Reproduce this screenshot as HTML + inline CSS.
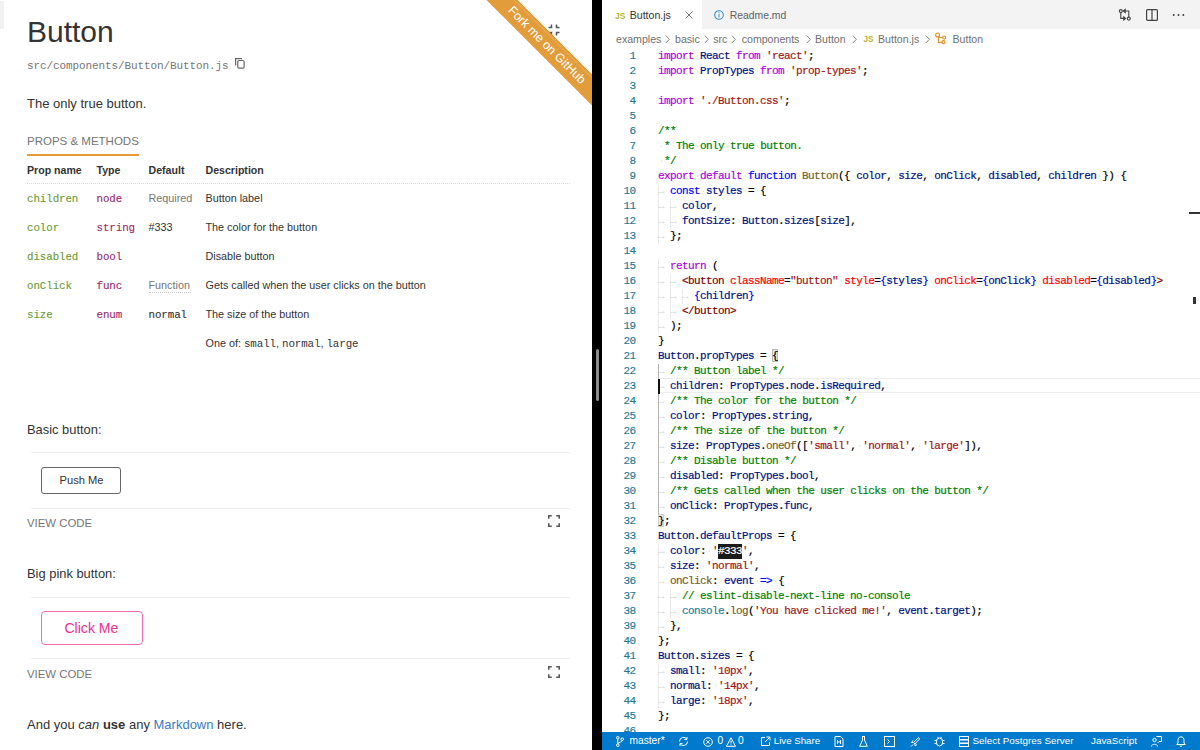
<!DOCTYPE html>
<html><head><meta charset="utf-8"><style>
html,body{margin:0;padding:0;width:1200px;height:750px;overflow:hidden;background:#fff;position:relative;font-family:"Liberation Sans",sans-serif}
.t{position:absolute;white-space:pre;margin:0}
.ln{position:absolute;left:599px;width:36.6px;text-align:right;font-family:"Liberation Mono",monospace;font-size:11px;line-height:15px;letter-spacing:-0.6px;color:#237893;white-space:pre;-webkit-text-stroke:0.15px}
.cl{position:absolute;left:658px;font-family:"Liberation Mono",monospace;font-size:11px;line-height:15px;letter-spacing:-0.6px;color:#000;white-space:pre;-webkit-text-stroke:0.2px}
.ws{color:rgba(51,51,51,0.15)}
.tab{color:rgba(51,51,51,0.18)}
.ig{position:absolute;width:0;height:15px;border-left:1px solid rgba(0,0,0,0.08)}
</style></head><body>
<div class="t" style="left:27px;top:17.31px;font-size:30px;line-height:30px;color:#333;font-family:'Liberation Sans', sans-serif;font-weight:normal;">Button</div>
<div class="t" style="left:27px;top:61.07px;font-size:11px;line-height:11px;color:#767676;font-family:'Liberation Mono', monospace;font-weight:normal;letter-spacing:-0.1px">src/components/Button/Button.js</div>
<svg class="t" style="left:234px;top:57px" width="12" height="13" viewBox="0 0 12 13"><path d="M1.6 8.5V1.6H8" fill="none" stroke="#666" stroke-width="1.2"/><rect x="3.8" y="3.5" width="6.3" height="7.7" rx="1.2" fill="none" stroke="#666" stroke-width="1.2"/></svg>
<div class="t" style="left:27px;top:97.40px;font-size:13px;line-height:13px;color:#333;font-family:'Liberation Sans', sans-serif;font-weight:normal;">The only true button.</div>
<div class="t" style="left:27px;top:136.27px;font-size:11.5px;line-height:11.5px;color:#767676;font-family:'Liberation Sans', sans-serif;font-weight:normal;">PROPS &amp; METHODS</div>
<div class="t" style="left:27px;top:154px;width:112px;height:2px;background:#e89b35"></div>
<div class="t" style="left:27px;top:165.03px;font-size:10.6px;line-height:10.6px;color:#333;font-family:'Liberation Sans', sans-serif;font-weight:bold;">Prop name</div>
<div class="t" style="left:96.5px;top:165.03px;font-size:10.6px;line-height:10.6px;color:#333;font-family:'Liberation Sans', sans-serif;font-weight:bold;">Type</div>
<div class="t" style="left:148.5px;top:165.03px;font-size:10.6px;line-height:10.6px;color:#333;font-family:'Liberation Sans', sans-serif;font-weight:bold;">Default</div>
<div class="t" style="left:205.5px;top:165.03px;font-size:10.6px;line-height:10.6px;color:#333;font-family:'Liberation Sans', sans-serif;font-weight:bold;">Description</div>
<div class="t" style="left:27px;top:182.5px;width:543px;height:1px;border-top:1px dotted #d8d8d8;height:0"></div>
<div class="t" style="left:27px;top:193.83px;font-size:10.8px;line-height:10.8px;color:#6a9a38;font-family:'Liberation Mono', monospace;font-weight:normal;letter-spacing:-0.07px;-webkit-text-stroke:0.12px">children</div>
<div class="t" style="left:96.5px;top:193.83px;font-size:10.8px;line-height:10.8px;color:#9a2a68;font-family:'Liberation Mono', monospace;font-weight:normal;letter-spacing:-0.07px;-webkit-text-stroke:0.12px">node</div>
<div class="t" style="left:148.5px;top:192.96px;font-size:10.8px;line-height:10.8px;color:#767676;font-family:'Liberation Sans', sans-serif;font-weight:normal;">Required</div>
<div class="t" style="left:205.5px;top:192.96px;font-size:10.8px;line-height:10.8px;color:#333;font-family:'Liberation Sans', sans-serif;font-weight:normal;">Button label</div>
<div class="t" style="left:27px;top:222.93px;font-size:10.8px;line-height:10.8px;color:#6a9a38;font-family:'Liberation Mono', monospace;font-weight:normal;letter-spacing:-0.07px;-webkit-text-stroke:0.12px">color</div>
<div class="t" style="left:96.5px;top:222.93px;font-size:10.8px;line-height:10.8px;color:#9a2a68;font-family:'Liberation Mono', monospace;font-weight:normal;letter-spacing:-0.07px;-webkit-text-stroke:0.12px">string</div>
<div class="t" style="left:148.5px;top:222.06px;font-size:10.8px;line-height:10.8px;color:#333;font-family:'Liberation Sans', sans-serif;font-weight:normal;">#333</div>
<div class="t" style="left:205.5px;top:222.06px;font-size:10.8px;line-height:10.8px;color:#333;font-family:'Liberation Sans', sans-serif;font-weight:normal;">The color for the button</div>
<div class="t" style="left:27px;top:252.03px;font-size:10.8px;line-height:10.8px;color:#6a9a38;font-family:'Liberation Mono', monospace;font-weight:normal;letter-spacing:-0.07px;-webkit-text-stroke:0.12px">disabled</div>
<div class="t" style="left:96.5px;top:252.03px;font-size:10.8px;line-height:10.8px;color:#9a2a68;font-family:'Liberation Mono', monospace;font-weight:normal;letter-spacing:-0.07px;-webkit-text-stroke:0.12px">bool</div>
<div class="t" style="left:205.5px;top:251.16px;font-size:10.8px;line-height:10.8px;color:#333;font-family:'Liberation Sans', sans-serif;font-weight:normal;">Disable button</div>
<div class="t" style="left:27px;top:281.13px;font-size:10.8px;line-height:10.8px;color:#6a9a38;font-family:'Liberation Mono', monospace;font-weight:normal;letter-spacing:-0.07px;-webkit-text-stroke:0.12px">onClick</div>
<div class="t" style="left:96.5px;top:281.13px;font-size:10.8px;line-height:10.8px;color:#9a2a68;font-family:'Liberation Mono', monospace;font-weight:normal;letter-spacing:-0.07px;-webkit-text-stroke:0.12px">func</div>
<div class="t" style="left:148.5px;top:280.26px;font-size:10.8px;line-height:10.8px;color:#767676;font-family:'Liberation Sans', sans-serif;font-weight:normal;">Function</div>
<div class="t" style="left:205.5px;top:280.26px;font-size:10.8px;line-height:10.8px;color:#333;font-family:'Liberation Sans', sans-serif;font-weight:normal;">Gets called when the user clicks on the button</div>
<div class="t" style="left:27px;top:310.23px;font-size:10.8px;line-height:10.8px;color:#6a9a38;font-family:'Liberation Mono', monospace;font-weight:normal;letter-spacing:-0.07px;-webkit-text-stroke:0.12px">size</div>
<div class="t" style="left:96.5px;top:310.23px;font-size:10.8px;line-height:10.8px;color:#9a2a68;font-family:'Liberation Mono', monospace;font-weight:normal;letter-spacing:-0.07px;-webkit-text-stroke:0.12px">enum</div>
<div class="t" style="left:148.5px;top:310.23px;font-size:10.8px;line-height:10.8px;color:#333;font-family:'Liberation Mono', monospace;font-weight:normal;letter-spacing:-0.07px;-webkit-text-stroke:0.12px">normal</div>
<div class="t" style="left:205.5px;top:309.36px;font-size:10.8px;line-height:10.8px;color:#333;font-family:'Liberation Sans', sans-serif;font-weight:normal;">The size of the button</div>
<div class="t" style="left:148.5px;top:292.4px;width:42px;height:0px;border-top:1px dotted #c8c8c8"></div>
<div class="t" style="left:205.5px;top:338.46px;font-size:10.8px;line-height:10.8px;color:#333;font-family:'Liberation Sans', sans-serif;font-weight:normal;">One of: <span style="font-family:'Liberation Mono', monospace;letter-spacing:-0.07px">small</span>, <span style="font-family:'Liberation Mono', monospace;letter-spacing:-0.07px">normal</span>, <span style="font-family:'Liberation Mono', monospace;letter-spacing:-0.07px">large</span></div>
<div class="t" style="left:27px;top:423.58px;font-size:12.9px;line-height:12.9px;color:#333;font-family:'Liberation Sans', sans-serif;font-weight:normal;">Basic button:</div>
<div class="t" style="left:31px;top:452px;width:539px;height:1px;background:#efefef"></div>
<div class="t" style="left:41px;top:467px;width:80px;height:27px;box-sizing:border-box;border:1px solid #666;border-radius:3px;background:#fff"></div>
<div class="t" style="left:59.5px;top:475.46px;font-size:11.15px;line-height:11.15px;color:#333;font-family:'Liberation Sans', sans-serif;font-weight:normal;">Push Me</div>
<div class="t" style="left:31px;top:507.5px;width:539px;height:1px;background:#efefef"></div>
<div class="t" style="left:27px;top:518.35px;font-size:11.4px;line-height:11.4px;color:#767676;font-family:'Liberation Sans', sans-serif;font-weight:normal;">VIEW CODE</div>
<svg class="t" style="left:548px;top:515px" width="12" height="12" viewBox="0 0 12 12"><path d="M0.8 3.8V0.8H3.8M8.2 0.8H11.2V3.8M11.2 8.2V11.2H8.2M3.8 11.2H0.8V8.2" fill="none" stroke="#5a5a5a" stroke-width="1.6"/></svg>
<div class="t" style="left:27px;top:567.78px;font-size:12.9px;line-height:12.9px;color:#333;font-family:'Liberation Sans', sans-serif;font-weight:normal;">Big pink button:</div>
<div class="t" style="left:31px;top:596.5px;width:539px;height:1px;background:#efefef"></div>
<div class="t" style="left:41px;top:611px;width:102px;height:34px;box-sizing:border-box;border:1px solid #f56cb2;border-radius:4px;background:#fff"></div>
<div class="t" style="left:64.4px;top:620.76px;font-size:14.1px;line-height:14.1px;color:#ec3192;font-family:'Liberation Sans', sans-serif;font-weight:normal;">Click Me</div>
<div class="t" style="left:31px;top:657.5px;width:539px;height:1px;background:#efefef"></div>
<div class="t" style="left:27px;top:668.65px;font-size:11.4px;line-height:11.4px;color:#767676;font-family:'Liberation Sans', sans-serif;font-weight:normal;">VIEW CODE</div>
<svg class="t" style="left:548px;top:666px" width="12" height="12" viewBox="0 0 12 12"><path d="M0.8 3.8V0.8H3.8M8.2 0.8H11.2V3.8M11.2 8.2V11.2H8.2M3.8 11.2H0.8V8.2" fill="none" stroke="#5a5a5a" stroke-width="1.6"/></svg>
<div class="t" style="left:27px;top:718.20px;font-size:13px;line-height:13px;color:#333;font-family:'Liberation Sans', sans-serif;font-weight:normal;">And you <i>can</i> <b>use</b> any <span style="color:#3a7cc0">Markdown</span> here.</div>
<svg class="t" style="left:548px;top:24px" width="12" height="12" viewBox="0 0 12 12"><path d="M3.5 0.5V3.5H0.5M8.5 0.5V3.5H11.5M11.5 8.5H8.5V11.5M0.5 8.5H3.5V11.5" fill="none" stroke="#555" stroke-width="1.5"/></svg>
<div class="t" style="left:0;top:0;width:592px;height:130px;overflow:hidden"><div style="position:absolute;left:447px;top:34px;width:200px;height:22px;background:#e29c3a;transform:rotate(45deg);box-shadow:inset 0 2px 0 #e29c3a,inset 0 3px 0 rgba(255,255,255,0.18);text-align:center;color:#fff;font-family:'Liberation Sans', sans-serif;font-size:12.3px;line-height:23.5px;white-space:nowrap">Fork me on GitHub</div></div>
<div class="t" style="left:0px;top:1px;width:4px;height:28px;background:#f1f1f1"></div>
<div class="t" style="left:592px;top:0px;width:10px;height:750px;background:#000"></div>
<div class="t" style="left:596px;top:349px;width:3px;height:52px;background:#8a8a8a;border-radius:2px"></div>
<div class="t" style="left:602px;top:0px;width:598px;height:29px;background:#f3f3f3"></div>
<div class="t" style="left:602px;top:0px;width:100px;height:29px;background:#fff"></div>
<div class="t" style="left:615px;top:12.30px;font-size:8.5px;line-height:8.5px;color:#b5b53a;font-family:'Liberation Sans', sans-serif;font-weight:bold;">JS</div>
<div class="t" style="left:629.7px;top:10.33px;font-size:10.6px;line-height:10.6px;color:#333;font-family:'Liberation Sans', sans-serif;font-weight:normal;">Button.js</div>
<svg class="t" style="left:684.5px;top:11px" width="8" height="8" viewBox="0 0 8 8"><path d="M0.5 0.5L7.5 7.5M7.5 0.5L0.5 7.5" stroke="#666" stroke-width="0.9"/></svg>
<svg class="t" style="left:714px;top:9.6px" width="10" height="10" viewBox="0 0 10 10"><circle cx="5" cy="5" r="4.3" fill="none" stroke="#3c93c6" stroke-width="1.1"/><rect x="4.5" y="4" width="1" height="3.5" fill="#3c93c6"/><rect x="4.5" y="2.3" width="1" height="1" fill="#3c93c6"/></svg>
<div class="t" style="left:729.7px;top:10.50px;font-size:10.4px;line-height:10.4px;color:#616161;font-family:'Liberation Sans', sans-serif;font-weight:normal;">Readme.md</div>
<svg class="t" style="left:1118px;top:8px" width="13" height="13" viewBox="0 0 13 13" fill="none" stroke="#424242" stroke-width="1.1"><circle cx="2.8" cy="3.1" r="1.5"/><path d="M2.8 4.6V10.4H6"/><path d="M5.8 8.9L7.6 10.4L5.8 11.9Z" fill="#424242"/><path d="M7.2 1.5L5.4 3L7.2 4.5Z" fill="#424242"/><path d="M7 3H10.8V9"/><circle cx="10.8" cy="10.6" r="1.5"/></svg>
<svg class="t" style="left:1146px;top:9px" width="12" height="12" viewBox="0 0 12 12" fill="none" stroke="#424242" stroke-width="1.2"><rect x="0.6" y="0.6" width="10.8" height="10.8" rx="1"/><path d="M6 0.6V11.4"/></svg>
<svg class="t" style="left:1172px;top:13px" width="13" height="4" viewBox="0 0 13 4" fill="#424242"><circle cx="1.7" cy="2" r="1"/><circle cx="6.5" cy="2" r="1"/><circle cx="11.3" cy="2" r="1"/></svg>
<div class="t" style="left:616px;top:33.53px;font-size:10.6px;line-height:10.6px;color:#6f6f6f;font-family:'Liberation Sans', sans-serif;font-weight:normal;">examples</div>
<svg class="t" style="left:665px;top:34.5px" width="6" height="9" viewBox="0 0 6 9"><path d="M0.8 0.6L4.4 4.3L0.8 8" fill="none" stroke="#7a7a7a" stroke-width="0.9"/></svg>
<div class="t" style="left:675px;top:33.53px;font-size:10.6px;line-height:10.6px;color:#6f6f6f;font-family:'Liberation Sans', sans-serif;font-weight:normal;">basic</div>
<svg class="t" style="left:704px;top:34.5px" width="6" height="9" viewBox="0 0 6 9"><path d="M0.8 0.6L4.4 4.3L0.8 8" fill="none" stroke="#7a7a7a" stroke-width="0.9"/></svg>
<div class="t" style="left:713.3px;top:33.53px;font-size:10.6px;line-height:10.6px;color:#6f6f6f;font-family:'Liberation Sans', sans-serif;font-weight:normal;">src</div>
<svg class="t" style="left:731px;top:34.5px" width="6" height="9" viewBox="0 0 6 9"><path d="M0.8 0.6L4.4 4.3L0.8 8" fill="none" stroke="#7a7a7a" stroke-width="0.9"/></svg>
<div class="t" style="left:741.7px;top:33.53px;font-size:10.6px;line-height:10.6px;color:#6f6f6f;font-family:'Liberation Sans', sans-serif;font-weight:normal;">components</div>
<svg class="t" style="left:805.5px;top:34.5px" width="6" height="9" viewBox="0 0 6 9"><path d="M0.8 0.6L4.4 4.3L0.8 8" fill="none" stroke="#7a7a7a" stroke-width="0.9"/></svg>
<div class="t" style="left:815px;top:33.53px;font-size:10.6px;line-height:10.6px;color:#6f6f6f;font-family:'Liberation Sans', sans-serif;font-weight:normal;">Button</div>
<svg class="t" style="left:852px;top:34.5px" width="6" height="9" viewBox="0 0 6 9"><path d="M0.8 0.6L4.4 4.3L0.8 8" fill="none" stroke="#7a7a7a" stroke-width="0.9"/></svg>
<div class="t" style="left:863.4px;top:35.56px;font-size:8.2px;line-height:8.2px;color:#c2b132;font-family:'Liberation Sans', sans-serif;font-weight:bold;">JS</div>
<div class="t" style="left:878px;top:33.53px;font-size:10.6px;line-height:10.6px;color:#6f6f6f;font-family:'Liberation Sans', sans-serif;font-weight:normal;">Button.js</div>
<svg class="t" style="left:925px;top:34.5px" width="6" height="9" viewBox="0 0 6 9"><path d="M0.8 0.6L4.4 4.3L0.8 8" fill="none" stroke="#7a7a7a" stroke-width="0.9"/></svg>
<svg class="t" style="left:934px;top:32px" width="12" height="13" viewBox="0 0 12 13" fill="none" stroke="#e0902a" stroke-width="1.2"><circle cx="3.6" cy="2.9" r="1.9"/><path d="M4.5 4.6V10.4H8M4.5 5.5H8.8"/><circle cx="10.2" cy="5.5" r="1.5"/><circle cx="9.5" cy="10.2" r="1.5"/></svg>
<div class="t" style="left:952.5px;top:33.53px;font-size:10.6px;line-height:10.6px;color:#6f6f6f;font-family:'Liberation Sans', sans-serif;font-weight:normal;">Button</div>
<div class="t" style="left:659px;top:378.0px;width:541px;height:13px;border-top:1px solid #ececec;border-bottom:1px solid #ececec"></div>
<div class="t" style="left:718px;top:543.6px;width:24px;height:15px;background:#1a1a1a"></div>
<div class="t" style="left:772.0px;top:349.1px;width:6px;height:13px;background:#e6e6e6;border:1px solid #b9b9b9;box-sizing:border-box"></div>
<div class="t" style="left:658.0px;top:514.1px;width:6px;height:13px;background:#eeeeee;border:1px solid #cfcfcf;box-sizing:border-box"></div>
<div class="ln" style="top:48.60px">1</div>
<div class="cl" style="top:48.60px"><span style="color:#af00db">import</span><span class="ws">·</span><span style="color:#001080">React</span><span class="ws">·</span><span style="color:#af00db">from</span><span class="ws">·</span><span style="color:#a31515">&#x27;react&#x27;</span><span style="color:#000000">;</span></div>
<div class="ln" style="top:63.60px">2</div>
<div class="cl" style="top:63.60px"><span style="color:#af00db">import</span><span class="ws">·</span><span style="color:#001080">PropTypes</span><span class="ws">·</span><span style="color:#af00db">from</span><span class="ws">·</span><span style="color:#a31515">&#x27;prop-types&#x27;</span><span style="color:#000000">;</span></div>
<div class="ln" style="top:78.60px">3</div>
<div class="cl" style="top:78.60px"></div>
<div class="ln" style="top:93.60px">4</div>
<div class="cl" style="top:93.60px"><span style="color:#af00db">import</span><span class="ws">·</span><span style="color:#a31515">&#x27;./Button.css&#x27;</span><span style="color:#000000">;</span></div>
<div class="ln" style="top:108.60px">5</div>
<div class="cl" style="top:108.60px"></div>
<div class="ln" style="top:123.60px">6</div>
<div class="cl" style="top:123.60px"><span style="color:#008000">/**</span></div>
<div class="ln" style="top:138.60px">7</div>
<div class="cl" style="top:138.60px"><span class="ws">·</span><span style="color:#008000">*</span><span class="ws">·</span><span style="color:#008000">The</span><span class="ws">·</span><span style="color:#008000">only</span><span class="ws">·</span><span style="color:#008000">true</span><span class="ws">·</span><span style="color:#008000">button.</span></div>
<div class="ln" style="top:153.60px">8</div>
<div class="cl" style="top:153.60px"><span class="ws">·</span><span style="color:#008000">*/</span></div>
<div class="ln" style="top:168.60px">9</div>
<div class="cl" style="top:168.60px"><span style="color:#af00db">export</span><span class="ws">·</span><span style="color:#af00db">default</span><span class="ws">·</span><span style="color:#0000ff">function</span><span class="ws">·</span><span style="color:#795e26">Button</span><span style="color:#000000">({</span><span class="ws">·</span><span style="color:#001080">color</span><span style="color:#000000">,</span><span class="ws">·</span><span style="color:#001080">size</span><span style="color:#000000">,</span><span class="ws">·</span><span style="color:#001080">onClick</span><span style="color:#000000">,</span><span class="ws">·</span><span style="color:#001080">disabled</span><span style="color:#000000">,</span><span class="ws">·</span><span style="color:#001080">children</span><span class="ws">·</span><span style="color:#000000">})</span><span class="ws">·</span><span style="color:#000000">{</span></div>
<div class="ln" style="top:183.60px">10</div>
<div class="cl" style="top:183.60px"><span class="tab">→ </span><span style="color:#0000ff">const</span><span class="ws">·</span><span style="color:#001080">styles</span><span class="ws">·</span><span style="color:#000000">=</span><span class="ws">·</span><span style="color:#000000">{</span></div>
<div class="ig" style="left:658.0px;top:183.60px"></div>
<div class="ln" style="top:198.60px">11</div>
<div class="cl" style="top:198.60px"><span class="tab">→ </span><span class="tab">→ </span><span style="color:#001080">color</span><span style="color:#000000">,</span></div>
<div class="ig" style="left:658.0px;top:198.60px"></div>
<div class="ig" style="left:670.0px;top:198.60px"></div>
<div class="ln" style="top:213.60px">12</div>
<div class="cl" style="top:213.60px"><span class="tab">→ </span><span class="tab">→ </span><span style="color:#001080">fontSize</span><span style="color:#000000">:</span><span class="ws">·</span><span style="color:#001080">Button</span><span style="color:#000000">.</span><span style="color:#001080">sizes</span><span style="color:#000000">[</span><span style="color:#001080">size</span><span style="color:#000000">],</span></div>
<div class="ig" style="left:658.0px;top:213.60px"></div>
<div class="ig" style="left:670.0px;top:213.60px"></div>
<div class="ln" style="top:228.60px">13</div>
<div class="cl" style="top:228.60px"><span class="tab">→ </span><span style="color:#000000">};</span></div>
<div class="ig" style="left:658.0px;top:228.60px"></div>
<div class="ln" style="top:243.60px">14</div>
<div class="cl" style="top:243.60px"></div>
<div class="ln" style="top:258.60px">15</div>
<div class="cl" style="top:258.60px"><span class="tab">→ </span><span style="color:#af00db">return</span><span class="ws">·</span><span style="color:#000000">(</span></div>
<div class="ig" style="left:658.0px;top:258.60px"></div>
<div class="ln" style="top:273.60px">16</div>
<div class="cl" style="top:273.60px"><span class="tab">→ </span><span class="tab">→ </span><span style="color:#800000">&lt;button</span><span class="ws">·</span><span style="color:#ff0000">className</span><span style="color:#000000">=</span><span style="color:#a31515">&quot;button&quot;</span><span class="ws">·</span><span style="color:#ff0000">style</span><span style="color:#000000">=</span><span style="color:#0000ff">{</span><span style="color:#001080">styles</span><span style="color:#0000ff">}</span><span class="ws">·</span><span style="color:#ff0000">onClick</span><span style="color:#000000">=</span><span style="color:#0000ff">{</span><span style="color:#001080">onClick</span><span style="color:#0000ff">}</span><span class="ws">·</span><span style="color:#ff0000">disabled</span><span style="color:#000000">=</span><span style="color:#0000ff">{</span><span style="color:#001080">disabled</span><span style="color:#0000ff">}</span><span style="color:#800000">&gt;</span></div>
<div class="ig" style="left:658.0px;top:273.60px"></div>
<div class="ig" style="left:670.0px;top:273.60px"></div>
<div class="ln" style="top:288.60px">17</div>
<div class="cl" style="top:288.60px"><span class="tab">→ </span><span class="tab">→ </span><span class="tab">→ </span><span style="color:#0000ff">{</span><span style="color:#001080">children</span><span style="color:#0000ff">}</span></div>
<div class="ig" style="left:658.0px;top:288.60px"></div>
<div class="ig" style="left:670.0px;top:288.60px"></div>
<div class="ig" style="left:682.0px;top:288.60px"></div>
<div class="ln" style="top:303.60px">18</div>
<div class="cl" style="top:303.60px"><span class="tab">→ </span><span class="tab">→ </span><span style="color:#800000">&lt;/button&gt;</span></div>
<div class="ig" style="left:658.0px;top:303.60px"></div>
<div class="ig" style="left:670.0px;top:303.60px"></div>
<div class="ln" style="top:318.60px">19</div>
<div class="cl" style="top:318.60px"><span class="tab">→ </span><span style="color:#000000">);</span></div>
<div class="ig" style="left:658.0px;top:318.60px"></div>
<div class="ln" style="top:333.60px">20</div>
<div class="cl" style="top:333.60px"><span style="color:#000000">}</span></div>
<div class="ln" style="top:348.60px">21</div>
<div class="cl" style="top:348.60px"><span style="color:#001080">Button</span><span style="color:#000000">.</span><span style="color:#001080">propTypes</span><span class="ws">·</span><span style="color:#000000">=</span><span class="ws">·</span><span style="color:#000000">{</span></div>
<div class="ln" style="top:363.60px">22</div>
<div class="cl" style="top:363.60px"><span class="tab">→ </span><span style="color:#008000">/**</span><span class="ws">·</span><span style="color:#008000">Button</span><span class="ws">·</span><span style="color:#008000">label</span><span class="ws">·</span><span style="color:#008000">*/</span></div>
<div class="ig" style="left:658.0px;top:363.60px"></div>
<div class="ln" style="top:378.60px">23</div>
<div class="cl" style="top:378.60px"><span class="tab">→ </span><span style="color:#001080">children</span><span style="color:#000000">:</span><span class="ws">·</span><span style="color:#001080">PropTypes</span><span style="color:#000000">.</span><span style="color:#001080">node</span><span style="color:#000000">.</span><span style="color:#001080">isRequired</span><span style="color:#000000">,</span></div>
<div class="ig" style="left:658.0px;top:378.60px"></div>
<div class="ln" style="top:393.60px">24</div>
<div class="cl" style="top:393.60px"><span class="tab">→ </span><span style="color:#008000">/**</span><span class="ws">·</span><span style="color:#008000">The</span><span class="ws">·</span><span style="color:#008000">color</span><span class="ws">·</span><span style="color:#008000">for</span><span class="ws">·</span><span style="color:#008000">the</span><span class="ws">·</span><span style="color:#008000">button</span><span class="ws">·</span><span style="color:#008000">*/</span></div>
<div class="ig" style="left:658.0px;top:393.60px"></div>
<div class="ln" style="top:408.60px">25</div>
<div class="cl" style="top:408.60px"><span class="tab">→ </span><span style="color:#001080">color</span><span style="color:#000000">:</span><span class="ws">·</span><span style="color:#001080">PropTypes</span><span style="color:#000000">.</span><span style="color:#001080">string</span><span style="color:#000000">,</span></div>
<div class="ig" style="left:658.0px;top:408.60px"></div>
<div class="ln" style="top:423.60px">26</div>
<div class="cl" style="top:423.60px"><span class="tab">→ </span><span style="color:#008000">/**</span><span class="ws">·</span><span style="color:#008000">The</span><span class="ws">·</span><span style="color:#008000">size</span><span class="ws">·</span><span style="color:#008000">of</span><span class="ws">·</span><span style="color:#008000">the</span><span class="ws">·</span><span style="color:#008000">button</span><span class="ws">·</span><span style="color:#008000">*/</span></div>
<div class="ig" style="left:658.0px;top:423.60px"></div>
<div class="ln" style="top:438.60px">27</div>
<div class="cl" style="top:438.60px"><span class="tab">→ </span><span style="color:#001080">size</span><span style="color:#000000">:</span><span class="ws">·</span><span style="color:#001080">PropTypes</span><span style="color:#000000">.</span><span style="color:#795e26">oneOf</span><span style="color:#000000">([</span><span style="color:#a31515">&#x27;small&#x27;</span><span style="color:#000000">,</span><span class="ws">·</span><span style="color:#a31515">&#x27;normal&#x27;</span><span style="color:#000000">,</span><span class="ws">·</span><span style="color:#a31515">&#x27;large&#x27;</span><span style="color:#000000">]),</span></div>
<div class="ig" style="left:658.0px;top:438.60px"></div>
<div class="ln" style="top:453.60px">28</div>
<div class="cl" style="top:453.60px"><span class="tab">→ </span><span style="color:#008000">/**</span><span class="ws">·</span><span style="color:#008000">Disable</span><span class="ws">·</span><span style="color:#008000">button</span><span class="ws">·</span><span style="color:#008000">*/</span></div>
<div class="ig" style="left:658.0px;top:453.60px"></div>
<div class="ln" style="top:468.60px">29</div>
<div class="cl" style="top:468.60px"><span class="tab">→ </span><span style="color:#001080">disabled</span><span style="color:#000000">:</span><span class="ws">·</span><span style="color:#001080">PropTypes</span><span style="color:#000000">.</span><span style="color:#001080">bool</span><span style="color:#000000">,</span></div>
<div class="ig" style="left:658.0px;top:468.60px"></div>
<div class="ln" style="top:483.60px">30</div>
<div class="cl" style="top:483.60px"><span class="tab">→ </span><span style="color:#008000">/**</span><span class="ws">·</span><span style="color:#008000">Gets</span><span class="ws">·</span><span style="color:#008000">called</span><span class="ws">·</span><span style="color:#008000">when</span><span class="ws">·</span><span style="color:#008000">the</span><span class="ws">·</span><span style="color:#008000">user</span><span class="ws">·</span><span style="color:#008000">clicks</span><span class="ws">·</span><span style="color:#008000">on</span><span class="ws">·</span><span style="color:#008000">the</span><span class="ws">·</span><span style="color:#008000">button</span><span class="ws">·</span><span style="color:#008000">*/</span></div>
<div class="ig" style="left:658.0px;top:483.60px"></div>
<div class="ln" style="top:498.60px">31</div>
<div class="cl" style="top:498.60px"><span class="tab">→ </span><span style="color:#001080">onClick</span><span style="color:#000000">:</span><span class="ws">·</span><span style="color:#001080">PropTypes</span><span style="color:#000000">.</span><span style="color:#001080">func</span><span style="color:#000000">,</span></div>
<div class="ig" style="left:658.0px;top:498.60px"></div>
<div class="ln" style="top:513.60px">32</div>
<div class="cl" style="top:513.60px"><span style="color:#000000">};</span></div>
<div class="ln" style="top:528.60px">33</div>
<div class="cl" style="top:528.60px"><span style="color:#001080">Button</span><span style="color:#000000">.</span><span style="color:#001080">defaultProps</span><span class="ws">·</span><span style="color:#000000">=</span><span class="ws">·</span><span style="color:#000000">{</span></div>
<div class="ln" style="top:543.60px">34</div>
<div class="cl" style="top:543.60px"><span class="tab">→ </span><span style="color:#001080">color</span><span style="color:#000000">:</span><span class="ws">·</span><span style="color:#a31515">&#x27;</span><span style="color:#fff">#333</span><span style="color:#a31515">&#x27;</span><span style="color:#000000">,</span></div>
<div class="ig" style="left:658.0px;top:543.60px"></div>
<div class="ln" style="top:558.60px">35</div>
<div class="cl" style="top:558.60px"><span class="tab">→ </span><span style="color:#001080">size</span><span style="color:#000000">:</span><span class="ws">·</span><span style="color:#a31515">&#x27;normal&#x27;</span><span style="color:#000000">,</span></div>
<div class="ig" style="left:658.0px;top:558.60px"></div>
<div class="ln" style="top:573.60px">36</div>
<div class="cl" style="top:573.60px"><span class="tab">→ </span><span style="color:#795e26">onClick</span><span style="color:#000000">:</span><span class="ws">·</span><span style="color:#001080">event</span><span class="ws">·</span><span style="color:#0000ff">=&gt;</span><span class="ws">·</span><span style="color:#000000">{</span></div>
<div class="ig" style="left:658.0px;top:573.60px"></div>
<div class="ln" style="top:588.60px">37</div>
<div class="cl" style="top:588.60px"><span class="tab">→ </span><span class="tab">→ </span><span style="color:#008000">//</span><span class="ws">·</span><span style="color:#008000">eslint-disable-next-line</span><span class="ws">·</span><span style="color:#008000">no-console</span></div>
<div class="ig" style="left:658.0px;top:588.60px"></div>
<div class="ig" style="left:670.0px;top:588.60px"></div>
<div class="ln" style="top:603.60px">38</div>
<div class="cl" style="top:603.60px"><span class="tab">→ </span><span class="tab">→ </span><span style="color:#267f99">console</span><span style="color:#000000">.</span><span style="color:#795e26">log</span><span style="color:#000000">(</span><span style="color:#a31515">&#x27;You</span><span class="ws">·</span><span style="color:#a31515">have</span><span class="ws">·</span><span style="color:#a31515">clicked</span><span class="ws">·</span><span style="color:#a31515">me!&#x27;</span><span style="color:#000000">,</span><span class="ws">·</span><span style="color:#001080">event</span><span style="color:#000000">.</span><span style="color:#001080">target</span><span style="color:#000000">);</span></div>
<div class="ig" style="left:658.0px;top:603.60px"></div>
<div class="ig" style="left:670.0px;top:603.60px"></div>
<div class="ln" style="top:618.60px">39</div>
<div class="cl" style="top:618.60px"><span class="tab">→ </span><span style="color:#000000">},</span></div>
<div class="ig" style="left:658.0px;top:618.60px"></div>
<div class="ln" style="top:633.60px">40</div>
<div class="cl" style="top:633.60px"><span style="color:#000000">};</span></div>
<div class="ln" style="top:648.60px">41</div>
<div class="cl" style="top:648.60px"><span style="color:#001080">Button</span><span style="color:#000000">.</span><span style="color:#001080">sizes</span><span class="ws">·</span><span style="color:#000000">=</span><span class="ws">·</span><span style="color:#000000">{</span></div>
<div class="ln" style="top:663.60px">42</div>
<div class="cl" style="top:663.60px"><span class="tab">→ </span><span style="color:#001080">small</span><span style="color:#000000">:</span><span class="ws">·</span><span style="color:#a31515">&#x27;10px&#x27;</span><span style="color:#000000">,</span></div>
<div class="ig" style="left:658.0px;top:663.60px"></div>
<div class="ln" style="top:678.60px">43</div>
<div class="cl" style="top:678.60px"><span class="tab">→ </span><span style="color:#001080">normal</span><span style="color:#000000">:</span><span class="ws">·</span><span style="color:#a31515">&#x27;14px&#x27;</span><span style="color:#000000">,</span></div>
<div class="ig" style="left:658.0px;top:678.60px"></div>
<div class="ln" style="top:693.60px">44</div>
<div class="cl" style="top:693.60px"><span class="tab">→ </span><span style="color:#001080">large</span><span style="color:#000000">:</span><span class="ws">·</span><span style="color:#a31515">&#x27;18px&#x27;</span><span style="color:#000000">,</span></div>
<div class="ig" style="left:658.0px;top:693.60px"></div>
<div class="ln" style="top:708.60px">45</div>
<div class="cl" style="top:708.60px"><span style="color:#000000">};</span></div>
<div class="ln" style="top:723.60px">46</div>
<div class="cl" style="top:723.60px"></div>
<div class="t" style="left:657.5px;top:363.6px;width:1px;height:150px;background:#b4b4b4"></div>
<div class="t" style="left:657.5px;top:378.6px;width:2px;height:15px;background:#111"></div>
<div class="t" style="left:1189px;top:212.3px;width:11px;height:1.6px;background:#333"></div>
<div class="t" style="left:1192.6px;top:296.6px;width:3.8px;height:7.5px;background:#333"></div>
<div class="t" style="left:602px;top:732px;width:598px;height:18px;background:#007acc"></div>
<svg class="t" style="left:616px;top:736px" width="8" height="11" viewBox="0 0 8 11" fill="none" stroke="#fff" stroke-width="1"><circle cx="1.8" cy="1.8" r="1.3"/><circle cx="1.8" cy="9.2" r="1.3"/><circle cx="6.2" cy="3.2" r="1.3"/><path d="M1.8 3.1V7.9M6.2 4.5C6.2 6.5 1.8 6 1.8 7.9"/></svg>
<div class="t" style="left:629.5px;top:735.87px;font-size:10.2px;line-height:10.2px;color:#fff;font-family:'Liberation Sans', sans-serif">master*</div>
<svg class="t" style="left:678px;top:736px" width="11" height="11" viewBox="0 0 11 11" fill="none" stroke="#fff" stroke-width="1"><path d="M1.5 5.5A4 4 0 0 1 9 3.5M9.5 5.5A4 4 0 0 1 2 7.5M9 1V3.5H6.5M2 10V7.5H4.5"/></svg>
<svg class="t" style="left:703px;top:736.5px" width="10" height="10" viewBox="0 0 10 10" fill="none" stroke="#fff" stroke-width="1"><circle cx="5" cy="5" r="4.3"/><path d="M3.2 3.2L6.8 6.8M6.8 3.2L3.2 6.8"/></svg>
<div class="t" style="left:717.5px;top:735.87px;font-size:10.2px;line-height:10.2px;color:#fff;font-family:'Liberation Sans', sans-serif">0</div>
<svg class="t" style="left:726px;top:736.5px" width="10" height="10" viewBox="0 0 10 10" fill="none" stroke="#fff" stroke-width="1"><path d="M5 0.8L9.5 9.3H0.5Z"/><path d="M5 3.5V6.5M5 7.5V8.3"/></svg>
<div class="t" style="left:738px;top:735.87px;font-size:10.2px;line-height:10.2px;color:#fff;font-family:'Liberation Sans', sans-serif">0</div>
<svg class="t" style="left:760px;top:736px" width="11" height="11" viewBox="0 0 11 11" fill="none" stroke="#fff" stroke-width="1"><path d="M5 1.5H1.5V9.5H9.5V6M6.5 1H10V4.5M10 1L5 6"/></svg>
<div class="t" style="left:773.75px;top:736.29px;font-size:9.7px;line-height:9.7px;color:#fff;font-family:'Liberation Sans', sans-serif">Live Share</div>
<svg class="t" style="left:834px;top:736px" width="10" height="11" viewBox="0 0 10 11" fill="none" stroke="#fff" stroke-width="1"><path d="M1 0.5H6.5L9 3V10.5H1Z"/><path d="M3.5 4V8M6.5 4V8M3.5 6H6.5"/></svg>
<svg class="t" style="left:859px;top:736px" width="9" height="11" viewBox="0 0 9 11" fill="none" stroke="#fff" stroke-width="1"><path d="M3 0.5H6M3.5 0.5V4L0.7 10.3H8.3L5.5 4V0.5"/></svg>
<svg class="t" style="left:884px;top:736px" width="11" height="11" viewBox="0 0 11 11" fill="none" stroke="#fff" stroke-width="1"><rect x="0.5" y="0.5" width="10" height="10"/><path d="M3.5 3.5L5.5 5.5L3.5 7.5"/></svg>
<svg class="t" style="left:910px;top:736px" width="10" height="11" viewBox="0 0 10 11" fill="none" stroke="#fff" stroke-width="1"><path d="M8.5 1.5L3.5 6.5L5 8L9.5 3ZM3.5 6.5L1.5 6.5L3 4.5M5 8V10L7 8.5M3 8.5L1 10.5"/></svg>
<svg class="t" style="left:934px;top:736px" width="11" height="11" viewBox="0 0 11 11" fill="none" stroke="#fff" stroke-width="1"><ellipse cx="5.5" cy="6" rx="3.2" ry="4"/><path d="M0.5 4.5H2.3M8.7 4.5H10.5M0.5 7.5H2.3M8.7 7.5H10.5M3.5 1L4.5 2.3M7.5 1L6.5 2.3"/></svg>
<svg class="t" style="left:959px;top:736px" width="10" height="11" viewBox="0 0 10 11" fill="none" stroke="#fff" stroke-width="1"><rect x="0.5" y="0.5" width="9" height="3"/><rect x="0.5" y="4" width="9" height="3"/><rect x="0.5" y="7.5" width="9" height="3"/></svg>
<div class="t" style="left:972.5px;top:736.12px;font-size:9.9px;line-height:9.9px;color:#fff;font-family:'Liberation Sans', sans-serif">Select Postgres Server</div>
<div class="t" style="left:1091px;top:736.16px;font-size:9.85px;line-height:9.85px;color:#fff;font-family:'Liberation Sans', sans-serif">JavaScript</div>
<svg class="t" style="left:1151px;top:736px" width="11" height="11" viewBox="0 0 11 11" fill="none" stroke="#fff" stroke-width="1"><circle cx="3.5" cy="4" r="1.7"/><path d="M0.5 10.5C0.5 7.5 6.5 7.5 6.5 10.5M5.5 0.5H10.5V5.5H8L6.5 7"/></svg>
<svg class="t" style="left:1176px;top:736px" width="10" height="11" viewBox="0 0 10 11" fill="none" stroke="#fff" stroke-width="1"><path d="M5 0.8C2.5 0.8 2 3 2 4.5V7L0.8 8.5H9.2L8 7V4.5C8 3 7.5 0.8 5 0.8ZM4 9.5A1 1 0 0 0 6 9.5"/></svg>
</body></html>
